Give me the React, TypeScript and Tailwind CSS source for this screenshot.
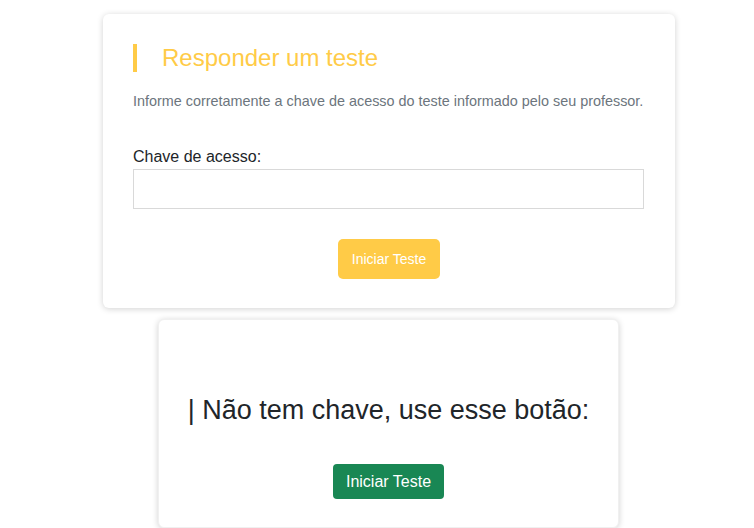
export default function App() {
  return (
    <div className="min-h-screen bg-white pl-[103px] pt-[14px] font-['Liberation_Sans',Arial,sans-serif]">
      <div className="w-[572px] rounded-md bg-white px-[30px] pb-[29px] pt-[30px] shadow-[0_1px_6px_rgba(0,0,0,0.18)]">
        <h2 className="border-l-4 border-[#ffcb47] pl-[25px] text-[24px] leading-[28px] text-[#ffcb47]">
          Responder um teste
        </h2>
        <p className="mt-[19px] text-[14.4px] leading-[20px] text-[#6c757d]">
          Informe corretamente a chave de acesso do teste informado pelo seu professor.
        </p>
        <label className="mt-[34px] block text-[16px] leading-[24px] text-[#212529]">
          Chave de acesso:
        </label>
        <input
          type="text"
          className="block h-[40px] w-[511px] border border-[#d9d9d9] bg-white px-3 text-[16px] outline-none"
        />
        <div className="mt-[30px] flex justify-center">
          <button className="h-[40px] rounded-[5px] bg-[#ffcb47] px-[14px] text-[14px] text-white">
            Iniciar Teste
          </button>
        </div>
      </div>

      <div className="ml-[55px] mt-[11px] flex w-[461px] flex-col items-center rounded-md border border-[#f0f0f0] bg-white pb-[28px] pt-[74px] shadow-[0_1px_6px_rgba(0,0,0,0.18)]">
        <h3 className="text-[27px] leading-[32px] text-[#212529]">| Não tem chave, use esse botão:</h3>
        <button className="mt-[38px] h-[35px] rounded-[4px] bg-[#198754] px-[13px] text-[16px] text-white">
          Iniciar Teste
        </button>
      </div>
    </div>
  );
}
